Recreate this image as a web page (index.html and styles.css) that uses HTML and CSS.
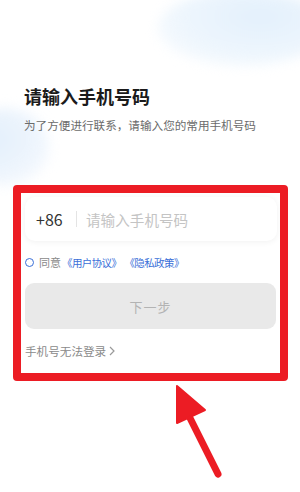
FILE: index.html
```html
<!DOCTYPE html>
<html>
<head>
    <meta charset="utf-8">
    <link rel="stylesheet" href="styles.css">
    <title>手机号登录</title>
</head>
<body>
    <div class="page">
        <div class="cloud cloudTop"></div>
        <div class="cloud cloudLeft"></div>

        <div class="header">
            <h1 class="title">请输入手机号码</h1>
            <p class="subtitle">为了方便进行联系，请输入您的常用手机号码</p>
        </div>

        <div class="form">
            <div class="phoneBox">
                <span class="code">+86</span>
                <span class="divider"></span>
                <input type="text" class="phoneInput" placeholder="请输入手机号码">
            </div>
            <div class="agree">
                <span class="radio"></span>
                <span class="agreeTxt">同意</span>
                <a href="#" class="link">《用户协议》</a>
                <a href="#" class="link">《隐私政策》</a>
            </div>
            <button class="nextBtn">下一步</button>
            <a href="#" class="cantLogin">手机号无法登录
                <svg class="chev" width="6" height="10" viewBox="0 0 6 10"><polyline points="1,1 5,5 1,9" fill="none" stroke="#9a9a9a" stroke-width="1.2"/></svg>
            </a>

            <!-- annotation frame -->
            <div class="redFrame"></div>
        </div>

        <svg class="arrow" width="70" height="110" viewBox="0 0 70 110">
            <line x1="58" y1="104" x2="26" y2="40" stroke="#ec1c24" stroke-width="7" stroke-linecap="round"/>
            <polygon points="17,16 17,53 45,40" fill="#ec1c24" stroke="#ec1c24" stroke-width="2" stroke-linejoin="round"/>
        </svg>
    </div>
</body>
</html>
```

FILE: styles.css
```css
*{
    margin: 0px;
    padding: 0px;
    box-sizing: border-box;
}
body{
    background-color: #ffffff;
    font-family: "Noto Sans CJK SC", "Noto Sans", sans-serif;
}
.page{
    position: relative;
    width: 300px;
    height: 492px;
    overflow: hidden;
    padding: 0px 24px;
}
.cloud{
    position: absolute;
    border-radius: 50%;
    filter: blur(6px);
}
.cloudTop{
    left: 158px;
    top: -10px;
    width: 170px;
    height: 76px;
    background: radial-gradient(ellipse at 60% 35%, #e3f0fc 0%, #eef6fd 55%, rgba(246,250,255,0) 100%);
}
.cloudLeft{
    left: -40px;
    top: 108px;
    width: 90px;
    height: 78px;
    background: radial-gradient(ellipse at 30% 40%, #e2effb 0%, #eef5fd 55%, rgba(246,250,255,0) 100%);
}
.header{
    position: relative;
    padding-top: 83px;
}
.title{
    font-size: 18px;
    line-height: 26px;
    font-weight: 700;
    color: #1b1b1b;
}
.subtitle{
    margin-top: 7px;
    font-size: 11.6px;
    line-height: 18px;
    color: #6b6b6b;
}
.form{
    position: relative;
    margin-top: 63px;
    padding: 0px 0px 0px 1px;
}
.phoneBox{
    display: flex;
    align-items: center;
    height: 44px;
    width: 252px;
    background-color: #ffffff;
    border-radius: 10px;
    box-shadow: 0px 1px 6px rgba(0, 0, 0, 0.06);
    padding-left: 11px;
}
.code{
    font-size: 16px;
    color: #333333;
    width: 28px;
}
.divider{
    width: 1px;
    height: 16px;
    background-color: #e4e4e4;
    margin: 0px 9px 0px 12px;
}
.phoneInput{
    border: none;
    outline: none;
    font-family: inherit;
    font-size: 14.6px;
    color: #333333;
    background: transparent;
    width: 170px;
}
.phoneInput::placeholder{
    color: #c4c4c4;
}
.agree{
    display: flex;
    align-items: center;
    height: 16px;
    margin-top: 13px;
    font-size: 11px;
}
.radio{
    width: 9px;
    height: 9px;
    border: 1.3px solid #3a6fd8;
    border-radius: 50%;
    margin-right: 5px;
}
.agreeTxt{
    color: #8a8a8a;
    margin-right: 1px;
}
.link{
    color: #3a6fd8;
    text-decoration: none;
    font-size: 10.5px;
    letter-spacing: -0.6px;
}
.link + .link{
    margin-left: 3px;
}
.nextBtn{
    display: block;
    margin-top: 13px;
    width: 251px;
    height: 46px;
    border: none;
    border-radius: 9px;
    background-color: #e9e9e9;
    color: #b3b3b3;
    font-family: inherit;
    font-size: 13px;
    letter-spacing: 1px;
}
.cantLogin{
    display: flex;
    align-items: center;
    gap: 3px;
    margin-top: 13px;
    line-height: 18px;
    font-size: 11.6px;
    color: #8a8a8a;
    text-decoration: none;
}
.redFrame{
    position: absolute;
    left: -11px;
    top: -12px;
    width: 275px;
    height: 196px;
    border: 8px solid #ec1c24;
    border-radius: 4px;
    pointer-events: none;
}
.arrow{
    position: absolute;
    left: 160px;
    top: 370px;
}
```
